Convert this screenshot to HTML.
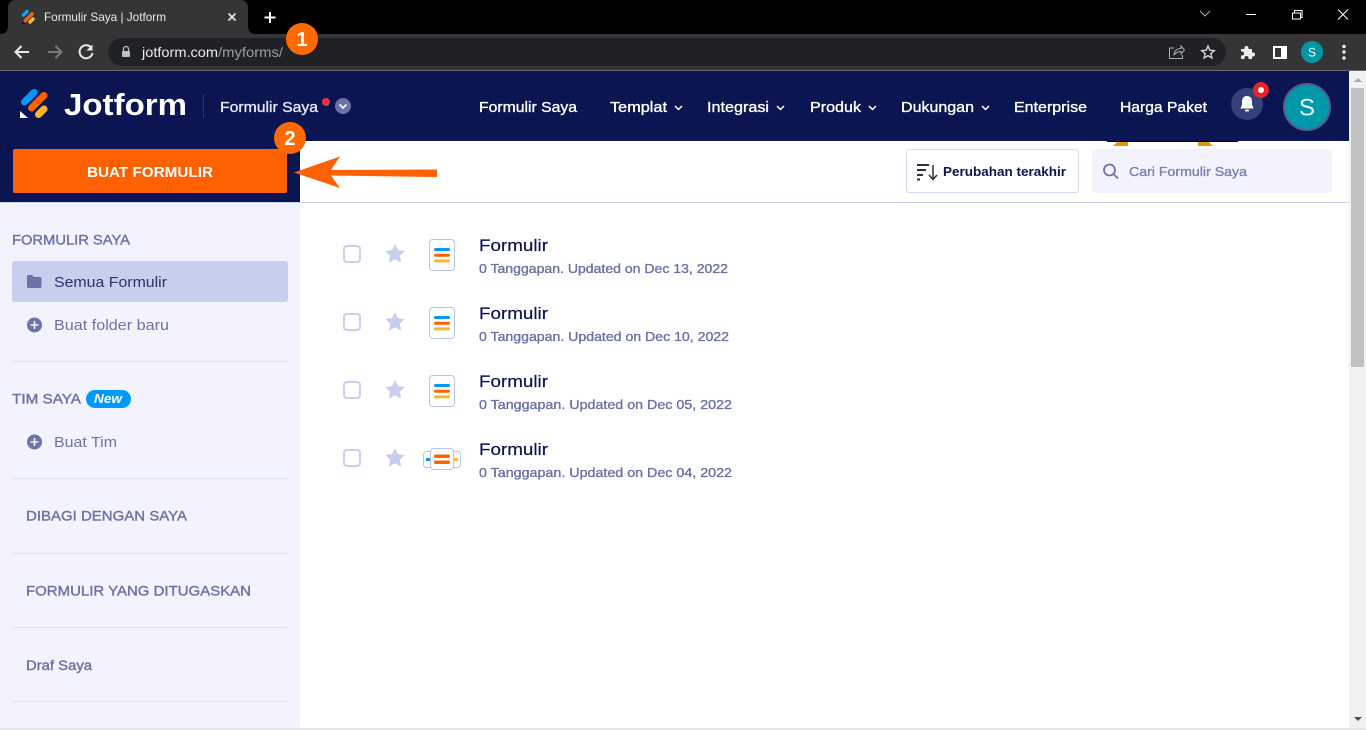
<!DOCTYPE html>
<html><head><meta charset="utf-8"><title>Formulir Saya | Jotform</title>
<style>
html,body{margin:0;padding:0;background:#fff;overflow:hidden;width:1366px;height:730px}
svg{display:block}
text{font-family:"Liberation Sans",sans-serif}
.n{fill:#fff;stroke:#fff;stroke-width:.35px;font-size:15px}
.s{fill:#6c73a8;stroke:#6c73a8;stroke-width:.4px;font-size:14px}
.l{fill:#6c73a8;font-size:15px}
.t{fill:#0a1551;stroke:#0a1551;stroke-width:.2px;font-size:17px}
.u{fill:#6c73a8;stroke:#6c73a8;stroke-width:.35px;font-size:13px}
</style></head><body>
<svg width="1366" height="730" viewBox="0 0 1366 730" xmlns="http://www.w3.org/2000/svg">
<defs>
<g id="doc"><rect x="429.500" y="239.500" width="25" height="31" rx="3.500" fill="#fff" stroke="#b8c4ec"/><rect x="434" y="248" width="16" height="3" rx="1.500" fill="#0099ff"/><rect x="434" y="253.700" width="16" height="3" rx="1.500" fill="#ff6100"/><rect x="434" y="259.400" width="16" height="3" rx="1.500" fill="#ffb629"/></g>
<path id="star" d="M395 244l3 6.300 6.800.8-5 4.700 1.300 6.800-6.100-3.400-6.100 3.400 1.300-6.800-5-4.700 6.800-.8z" fill="#c8ceed"/>
<rect id="cb" x="344" y="246" width="16" height="16" rx="3" fill="#fff" stroke="#c8ceed" stroke-width="2"/>
<path id="chev" d="M0 0l3.500 3.500L7 0" fill="none" stroke="#fff" stroke-width="1.500"/>
</defs>

<!-- browser chrome -->
<rect width="1366" height="34" fill="#000"/>
<path d="M0 34q8 0 8-8V8q0-8 8-8h224q8 0 8 8v18q0 8 8 8z" fill="#353535"/>
<rect y="34" width="1366" height="36" fill="#353535"/>
<rect y="70" width="1366" height="1" fill="#6a6a6a"/>
<g stroke-linecap="round">
<line x1="23.500" y1="15" x2="27" y2="11.500" stroke="#1a9cf0" stroke-width="3.500"/>
<line x1="25" y1="21" x2="32" y2="14" stroke="#ff6100" stroke-width="3.500"/>
<line x1="30" y1="22" x2="33" y2="19" stroke="#ffb629" stroke-width="3.500"/>
</g>
<path d="M22 20v4h4z" fill="#0a1551"/>
<text x="44" y="21" font-size="12" fill="#e8eaed" textLength="122" lengthAdjust="spacingAndGlyphs">Formulir Saya | Jotform</text>
<path d="M228.500 13.500l7 7M235.500 13.500l-7 7" stroke="#e8eaed" stroke-width="1.600" fill="none"/>
<path d="M270 12v11M264.500 17.500h11" stroke="#fff" stroke-width="2" fill="none"/>
<path d="M1200 11l5 5 5-5" stroke="#aaa" stroke-width="1" fill="none"/>
<rect x="1246" y="14" width="10" height="1" fill="#fff"/>
<path d="M1292.500 12.500h8v6h-8zM1294.500 12.500v-2.500h7.500v7h-1.500" stroke="#fff" stroke-width="1" fill="none" transform="translate(0,.5)"/>
<path d="M1338 9.500l10 10M1348 9.500l-10 10" stroke="#fff" stroke-width="1" fill="none"/>

<path d="M29 52H16M21.500 46l-6 6 6 6" stroke="#e8eaed" stroke-width="2" fill="none"/>
<path d="M48 52h13M55.500 46l6 6-6 6" stroke="#787a7d" stroke-width="2" fill="none"/>
<path d="M91 47.500a6.500 6.500 0 1 0 1.500 5.500" stroke="#e8eaed" stroke-width="2" fill="none"/><path d="M92.500 44.500v6h-6z" fill="#e8eaed"/>
<rect x="108" y="38" width="1118" height="28" rx="14" fill="#202124"/>
<rect x="122" y="51" width="8" height="6" rx="1" fill="#bdc1c6"/><path d="M123.500 51v-2a2.500 2.500 0 0 1 5 0v2" stroke="#bdc1c6" stroke-width="1.300" fill="none"/>
<text x="142" y="57" font-size="14" fill="#e8eaed" textLength="76" lengthAdjust="spacingAndGlyphs">jotform.com</text>
<text x="218" y="57" font-size="14" fill="#9aa0a6" textLength="65" lengthAdjust="spacingAndGlyphs">/myforms/</text>
<path d="M1174 48h-4.500v10.500h13V55M1174 55c0-4 3-6.500 7-6.500V46l3.500 4-3.500 4v-2.500c-3 0-5 1-7 3.500z" stroke="#a8abaf" stroke-width="1" fill="none"/>
<path d="M1208 46l1.800 4.200 4.500.4-3.400 3 1 4.400-3.900-2.300-3.900 2.300 1-4.400-3.400-3 4.500-.4z" stroke="#d5d7da" stroke-width="1.400" fill="none"/>
<path d="M1241 49h3.500v-1a2 2 0 0 1 4 0v1h3.500v3.500h1a2 2 0 0 1 0 4h-1v2.500h-3.500v-1a2 2 0 0 0-4 0v1h-3.500v-3.500h1a2 2 0 0 0 0-4h-1z" fill="#eceef0"/>
<rect x="1274" y="47" width="12" height="11" fill="none" stroke="#fff" stroke-width="2"/><rect x="1281" y="47" width="6" height="11" fill="#fff"/>
<circle cx="1312" cy="52" r="11" fill="#0097a7"/>
<text x="1312" y="56.500" font-size="12" fill="#fff" text-anchor="middle">S</text>
<circle cx="1344" cy="46.500" r="1.700" fill="#e8eaed"/><circle cx="1344" cy="52" r="1.700" fill="#e8eaed"/><circle cx="1344" cy="58" r="1.700" fill="#e8eaed"/>

<!-- page bg -->
<rect x="0" y="71" width="1349" height="70" fill="#0a1551"/>
<rect x="300" y="141" width="1049" height="61" fill="#fff"/>
<rect x="0" y="141" width="300" height="61" fill="#0a1551"/>
<rect x="300" y="202" width="1049" height="1" fill="#c8ceed"/>
<rect x="0" y="202" width="300" height="1" fill="#c8ceed"/>
<rect x="0" y="203" width="300" height="525" fill="#f3f3fe"/>

<!-- scrollbar -->
<rect x="1349" y="71" width="17" height="657" fill="#f1f1f1"/>
<rect x="1351" y="88" width="13" height="279" fill="#c1c1c1"/>
<path d="M1354 82l4-4 4 4z" fill="#a8a8a8"/>
<path d="M1354 717l4 4 4-4z" fill="#505050"/>
<rect y="728" width="1366" height="2" fill="#e4e4e4"/>

<!-- logo -->
<g stroke-linecap="round" stroke-width="7">
<line x1="24.500" y1="102" x2="34" y2="92.500" stroke="#0099ff"/>
<line x1="31.500" y1="108" x2="44" y2="95.500" stroke="#ff6100"/>
<line x1="38.500" y1="114.500" x2="44" y2="109" stroke="#ffb629"/>
</g>
<path d="M20 111v7h8z" fill="#fff"/>
<text x="64" y="115" font-size="31" font-weight="700" fill="#fff" textLength="123" lengthAdjust="spacingAndGlyphs">Jotform</text>
<rect x="203" y="94" width="1" height="24" fill="#2b3670"/>
<text class="n" x="220" y="112" style="fill:#e6e8f5;stroke:#e6e8f5" textLength="98" lengthAdjust="spacingAndGlyphs">Formulir Saya</text>
<circle cx="326" cy="102" r="4" fill="#e8323c"/>
<circle cx="343" cy="106" r="8" fill="#6c73a8"/>
<path d="M339.500 104.500l3.500 3.500 3.500-3.500" stroke="#fff" stroke-width="1.600" fill="none"/>

<!-- nav -->
<text class="n" x="479" y="112" textLength="98" lengthAdjust="spacingAndGlyphs">Formulir Saya</text>
<text class="n" x="610" y="112" textLength="57" lengthAdjust="spacingAndGlyphs">Templat</text>
<use href="#chev" x="675" y="106"/>
<text class="n" x="707" y="112" textLength="62" lengthAdjust="spacingAndGlyphs">Integrasi</text>
<use href="#chev" x="777" y="106"/>
<text class="n" x="810" y="112" textLength="51" lengthAdjust="spacingAndGlyphs">Produk</text>
<use href="#chev" x="869" y="106"/>
<text class="n" x="901" y="112" textLength="73" lengthAdjust="spacingAndGlyphs">Dukungan</text>
<use href="#chev" x="982" y="106"/>
<text class="n" x="1014" y="112" textLength="73" lengthAdjust="spacingAndGlyphs">Enterprise</text>
<text class="n" x="1120" y="112" textLength="87" lengthAdjust="spacingAndGlyphs">Harga Paket</text>

<!-- bell + avatar -->
<circle cx="1247" cy="104" r="16" fill="#374076"/>
<path d="M1247 96c-3.500 0-5 2.500-5 5.500v3l-1.500 4h13l-1.500-4v-3c0-3-1.500-5.500-5-5.500z" fill="#fff"/><rect x="1245" y="109.500" width="4" height="2" rx="1" fill="#fff"/>
<circle cx="1261" cy="90" r="8" fill="#e8212b"/><circle cx="1261" cy="90" r="3" fill="#fff"/>
<circle cx="1307" cy="107" r="23" fill="#0099aa" stroke="#535c8f" stroke-width="2"/>
<text x="1307" y="115.500" font-size="24" fill="#e9fbfd" text-anchor="middle">S</text>

<!-- artifact -->
<rect x="1107" y="141" width="131" height="1" fill="#000"/>
<path d="M1113 146l4-4h11v4z" fill="#e8950e"/><path d="M1198 142h11l4 4h-15z" fill="#e8950e"/>

<!-- create button -->
<rect x="13" y="149" width="274" height="44" rx="2" fill="#ff6100"/>
<text x="87" y="177" font-size="15" font-weight="700" fill="#fff" textLength="126" lengthAdjust="spacingAndGlyphs">BUAT FORMULIR</text>
<circle cx="290" cy="138" r="16" fill="#ff6a00"/>
<text x="290" y="145" font-size="20" font-weight="700" fill="#fff" text-anchor="middle">2</text>
<circle cx="302" cy="39" r="16" fill="#ff6a00"/>
<text x="302" y="46" font-size="20" font-weight="700" fill="#fff" text-anchor="middle">1</text>
<path d="M294 172.500L340 156.500 331 170 437 169.500V177L331 175.500 340 188z" fill="#ff6100"/>

<!-- sort + search -->
<rect x="906.500" y="149.500" width="172" height="43" rx="3" fill="#fff" stroke="#d8dbee"/>
<path d="M917 165h12M917 170h9M917 175h6M917 179.500h3" stroke="#2b3245" stroke-width="2" fill="none"/>
<path d="M933 165v14M929 175l4 4.500 4-4.500" stroke="#2b3245" stroke-width="1.500" fill="none"/>
<text x="943" y="176" font-size="13" font-weight="700" fill="#0a1551" textLength="123" lengthAdjust="spacingAndGlyphs">Perubahan terakhir</text>
<rect x="1092" y="149" width="240" height="44" rx="3" fill="#f3f3fe"/>
<circle cx="1109.500" cy="170" r="5.500" fill="none" stroke="#6c73a8" stroke-width="1.800"/>
<path d="M1113.500 174l4.500 4.500" stroke="#6c73a8" stroke-width="1.800"/>
<text x="1129" y="176" font-size="13" fill="#7a81b0" stroke="#7a81b0" stroke-width=".35" textLength="118" lengthAdjust="spacingAndGlyphs">Cari Formulir Saya</text>

<!-- sidebar -->
<text class="s" x="12" y="244.500" textLength="118" lengthAdjust="spacingAndGlyphs">FORMULIR SAYA</text>
<rect x="12" y="261" width="276" height="41" rx="3" fill="#c8ceed"/>
<path d="M27 276.500a1.500 1.500 0 0 1 1.500-1.500h3.500l2 2h6a1.500 1.500 0 0 1 1.500 1.500v8a1.500 1.500 0 0 1-1.500 1.500h-11.500a1.500 1.500 0 0 1-1.500-1.500z" fill="#6c73a8"/>
<text x="54" y="287" font-size="15" fill="#2b3469" textLength="113" lengthAdjust="spacingAndGlyphs">Semua Formulir</text>
<circle cx="34.500" cy="325" r="7.500" fill="#6c73a8"/><path d="M34.500 321v8M30.500 325h8" stroke="#f3f3fe" stroke-width="1.600"/>
<text class="l" x="54" y="330" textLength="115" lengthAdjust="spacingAndGlyphs">Buat folder baru</text>
<rect x="12" y="361" width="276" height="1" fill="#e0e2f2"/>
<text class="s" x="12" y="403.500" textLength="69" lengthAdjust="spacingAndGlyphs">TIM SAYA</text>
<rect x="86" y="390" width="45" height="18" rx="9" fill="#0099ff"/>
<text x="94" y="403" font-size="13" font-weight="700" font-style="italic" fill="#fff" textLength="28" lengthAdjust="spacingAndGlyphs">New</text>
<circle cx="34.500" cy="442" r="7.500" fill="#6c73a8"/><path d="M34.500 438v8M30.500 442h8" stroke="#f3f3fe" stroke-width="1.600"/>
<text class="l" x="54" y="447" textLength="63" lengthAdjust="spacingAndGlyphs">Buat Tim</text>
<rect x="12" y="478" width="276" height="1" fill="#e0e2f2"/>
<text class="s" x="26" y="520.500" textLength="161" lengthAdjust="spacingAndGlyphs">DIBAGI DENGAN SAYA</text>
<rect x="12" y="553" width="276" height="1" fill="#e0e2f2"/>
<text class="s" x="26" y="595.500" textLength="225" lengthAdjust="spacingAndGlyphs">FORMULIR YANG DITUGASKAN</text>
<rect x="12" y="627" width="276" height="1" fill="#e0e2f2"/>
<text class="s" x="26" y="670" textLength="66" lengthAdjust="spacingAndGlyphs">Draf Saya</text>
<rect x="12" y="701" width="276" height="1" fill="#e0e2f2"/>

<!-- rows -->
<use href="#cb"/><use href="#star"/><use href="#doc"/>
<text class="t" x="479" y="251" textLength="69" lengthAdjust="spacingAndGlyphs">Formulir</text>
<text class="u" x="479" y="273" textLength="249" lengthAdjust="spacingAndGlyphs">0 Tanggapan. Updated on Dec 13, 2022</text>

<use href="#cb" y="68"/><use href="#star" y="68"/><use href="#doc" y="68"/>
<text class="t" x="479" y="319" textLength="69" lengthAdjust="spacingAndGlyphs">Formulir</text>
<text class="u" x="479" y="341" textLength="250" lengthAdjust="spacingAndGlyphs">0 Tanggapan. Updated on Dec 10, 2022</text>

<use href="#cb" y="136"/><use href="#star" y="136"/><use href="#doc" y="136"/>
<text class="t" x="479" y="387" textLength="69" lengthAdjust="spacingAndGlyphs">Formulir</text>
<text class="u" x="479" y="409" textLength="253" lengthAdjust="spacingAndGlyphs">0 Tanggapan. Updated on Dec 05, 2022</text>

<use href="#cb" y="204"/><use href="#star" y="204"/>
<rect x="423.500" y="451.500" width="37" height="16" rx="3" fill="#fff" stroke="#b8c4ec"/>
<rect x="426" y="458" width="6" height="3" fill="#0099ff"/><rect x="452" y="458" width="6" height="3" fill="#ffb629"/>
<rect x="430.500" y="448.500" width="23" height="21" rx="3.500" fill="#fff" stroke="#b8c4ec"/>
<rect x="434" y="454.500" width="16" height="3.500" rx="1.700" fill="#ff6100"/><rect x="434" y="460.500" width="16" height="3.500" rx="1.700" fill="#ff6100"/>
<text class="t" x="479" y="455" textLength="69" lengthAdjust="spacingAndGlyphs">Formulir</text>
<text class="u" x="479" y="477" textLength="253" lengthAdjust="spacingAndGlyphs">0 Tanggapan. Updated on Dec 04, 2022</text>
</svg>
</body></html>
